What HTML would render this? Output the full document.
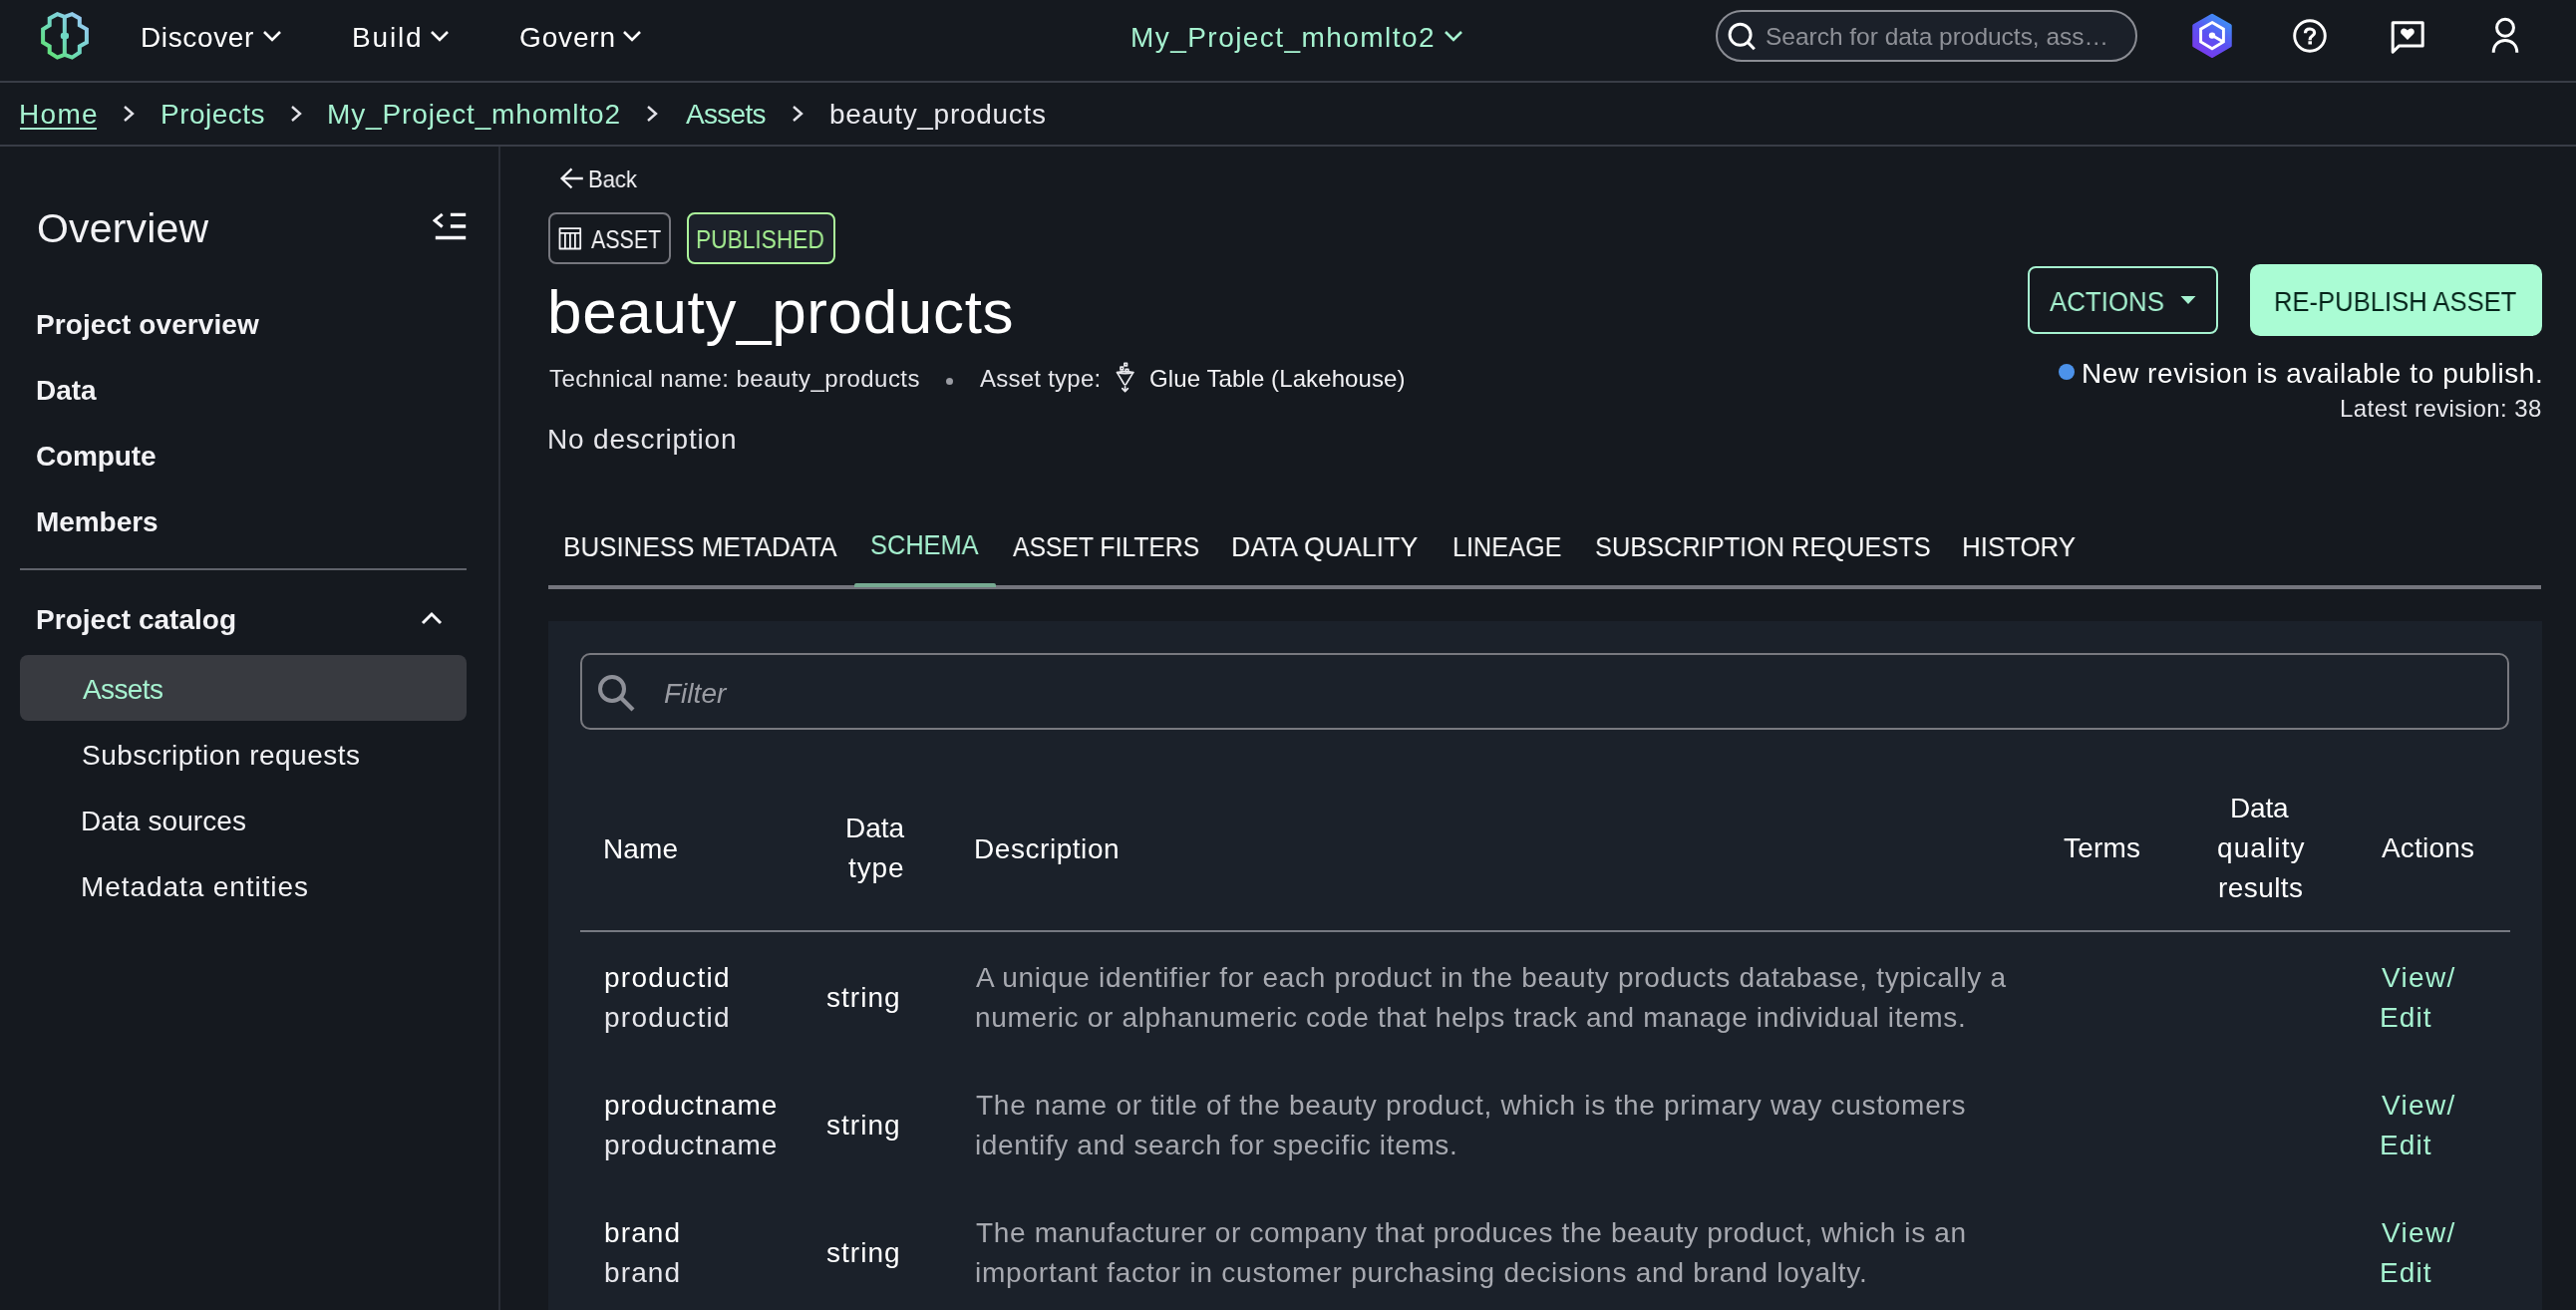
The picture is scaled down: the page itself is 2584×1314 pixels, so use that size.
<!DOCTYPE html>
<html><head><meta charset="utf-8"><title>beauty_products</title>
<style>
html,body{margin:0;padding:0;}
body{width:2584px;height:1314px;overflow:hidden;background:#15191f;position:relative;font-family:"Liberation Sans",sans-serif;}
.t{position:absolute;white-space:nowrap;display:block;will-change:transform;}
.a{position:absolute;}
</style></head><body>
<!-- layout lines -->
<div class="a" style="left:0;top:81px;width:2584px;height:2px;background:#393d46"></div>
<div class="a" style="left:0;top:145px;width:2584px;height:2px;background:#393d46"></div>
<div class="a" style="left:500px;top:147px;width:2px;height:1167px;background:#2a2e37"></div>
<div class="a" style="left:20px;top:570px;width:448px;height:2px;background:#5f626a"></div>
<div class="a" style="left:20px;top:657px;width:448px;height:66px;border-radius:8px;background:#383a40"></div>
<!-- container -->
<div class="a" style="left:550px;top:623px;width:2000px;height:700px;background:#1b212a"></div>
<!-- logo -->
<svg class="a" style="left:36px;top:8px" width="60" height="58" viewBox="0 0 60 58">
 <defs><linearGradient id="lg" gradientUnits="userSpaceOnUse" x1="8" y1="50" x2="51" y2="7"><stop offset="0" stop-color="#5fe36a"/><stop offset="0.5" stop-color="#70d8c4"/><stop offset="1" stop-color="#a0c6fb"/></linearGradient></defs>
 <g fill="none" stroke="url(#lg)" stroke-width="4" stroke-linejoin="miter">
  <path d="M21.5 6.2 L28.8 8.9 L36.3 6.2 L43.8 10.4 L43.8 17.3 L50.9 21.3 L50.9 34.5 L43.8 38.5 L43.8 44.7 L36.3 49.6 L28.8 46.9 L21.5 49.6 L13.7 44.7 L13.7 38.5 L7.1 34.5 L7.1 21.3 L13.7 17.3 L13.7 10.4 Z"/>
  <path d="M28.8 8.9 V46.9"/>
 </g>
 <rect x="24.8" y="25" width="8.2" height="6" rx="2" fill="#70d8c4"/>
</svg>
<!-- nav chevrons -->
<svg class="a" style="left:262px;top:28px" width="22" height="18" viewBox="0 0 22 18"><path d="M3 4 L11 12 L19 4" fill="none" stroke="#fff" stroke-width="2.6"/></svg>
<svg class="a" style="left:430px;top:28px" width="22" height="18" viewBox="0 0 22 18"><path d="M3 4 L11 12 L19 4" fill="none" stroke="#fff" stroke-width="2.6"/></svg>
<svg class="a" style="left:623px;top:28px" width="22" height="18" viewBox="0 0 22 18"><path d="M3 4 L11 12 L19 4" fill="none" stroke="#fff" stroke-width="2.6"/></svg>
<svg class="a" style="left:1447px;top:28px" width="22" height="18" viewBox="0 0 22 18"><path d="M3 4 L11 12 L19 4" fill="none" stroke="#a6f2d0" stroke-width="2.6"/></svg>
<!-- search pill -->
<div class="a" style="left:1721px;top:10px;width:419px;height:48px;border:2px solid #8b8d94;border-radius:26px;background:#1b2029"></div>
<svg class="a" style="left:1732px;top:21px" width="32" height="32" viewBox="0 0 32 32"><circle cx="13.6" cy="13.8" r="10.5" fill="none" stroke="#fff" stroke-width="3"/><path d="M21.2 21.4 L27.8 28.2" stroke="#fff" stroke-width="3"/></svg>
<!-- Q hex icon -->
<svg class="a" style="left:2194px;top:10px" width="50" height="52" viewBox="0 0 50 52">
 <defs><linearGradient id="qg" gradientUnits="userSpaceOnUse" x1="38" y1="8" x2="14" y2="46"><stop offset="0" stop-color="#3d93f6"/><stop offset="0.5" stop-color="#5a52f2"/><stop offset="1" stop-color="#7a38ec"/></linearGradient></defs>
 <path d="M25 5.5 L43 15.8 L43 35.8 L25 46.2 L7 35.8 L7 15.8 Z" fill="url(#qg)" stroke="url(#qg)" stroke-width="3.5" stroke-linejoin="round"/>
 <path d="M25 12.6 L36.4 19.2 L36.4 32 L25 38.8 L13.6 32 L13.6 19.2 Z" fill="none" stroke="#fff" stroke-width="2.9" stroke-linejoin="miter"/>
 <path d="M25 25.6 L35.5 31.6" stroke="#fff" stroke-width="2.9"/><circle cx="25" cy="25.6" r="3.2" fill="#fff"/>
</svg>
<!-- help -->
<svg class="a" style="left:2299px;top:18px" width="36" height="36" viewBox="0 0 36 36"><circle cx="18" cy="18" r="15.3" fill="none" stroke="#fff" stroke-width="2.9"/><path d="M13.5 15.2 C13.5 12.4 15.5 11 18 11 C20.7 11 22.6 12.7 22.6 15 C22.6 17.9 18.2 18.2 18.2 21.2 V22.2" fill="none" stroke="#fff" stroke-width="3.2"/><rect x="16.4" y="23.3" width="3.6" height="3.2" fill="#fff"/></svg>
<!-- feedback -->
<svg class="a" style="left:2396px;top:19px" width="38" height="36" viewBox="0 0 38 36"><path d="M4.2 33.2 V3.7 H34.2 V26.9 H10.6 Z" fill="none" stroke="#fff" stroke-width="3" stroke-linejoin="round"/><path d="M19 21 L13.2 15.3 C11.6 13.7 11.9 10.6 14.3 9.7 C16.3 9 18 10.2 19 11.6 C20 10.2 21.7 9 23.7 9.7 C26.1 10.6 26.4 13.7 24.8 15.3 Z" fill="#fff"/></svg>
<!-- user -->
<svg class="a" style="left:2497px;top:16px" width="32" height="38" viewBox="0 0 32 38"><circle cx="16" cy="11.75" r="8.45" fill="none" stroke="#fff" stroke-width="3"/><path d="M4.2 36.7 C4.2 29 9.5 24.6 16 24.6 C22.5 24.6 27.8 29 27.8 36.7" fill="none" stroke="#fff" stroke-width="3"/></svg>
<!-- breadcrumb chevrons -->
<svg class="a" style="left:122px;top:104px" width="16" height="20" viewBox="0 0 16 20"><path d="M3 3 L11 10 L3 17" fill="none" stroke="#e2e2e8" stroke-width="2.4"/></svg>
<svg class="a" style="left:290px;top:104px" width="16" height="20" viewBox="0 0 16 20"><path d="M3 3 L11 10 L3 17" fill="none" stroke="#e2e2e8" stroke-width="2.4"/></svg>
<svg class="a" style="left:647px;top:104px" width="16" height="20" viewBox="0 0 16 20"><path d="M3 3 L11 10 L3 17" fill="none" stroke="#e2e2e8" stroke-width="2.4"/></svg>
<svg class="a" style="left:793px;top:104px" width="16" height="20" viewBox="0 0 16 20"><path d="M3 3 L11 10 L3 17" fill="none" stroke="#e2e2e8" stroke-width="2.4"/></svg>
<div class="a" style="left:20px;top:128px;width:77px;height:2px;background:#a6f2d0"></div>
<!-- collapse icon -->
<svg class="a" style="left:434px;top:212px" width="36" height="32" viewBox="0 0 36 32"><path d="M9.7 2.9 L2.1 9.2 L9.7 15.5" fill="none" stroke="#f7f7fa" stroke-width="3"/><path d="M17.9 3.35 H33.2 M17.9 15 H33.2 M2.8 26.5 H33.2" stroke="#f7f7fa" stroke-width="3.4"/></svg>
<!-- chevron up -->
<svg class="a" style="left:420px;top:610px" width="26" height="20" viewBox="0 0 26 20"><path d="M4 15 L13 6 L22 15" fill="none" stroke="#f7f7fa" stroke-width="3"/></svg>
<!-- back arrow -->
<svg class="a" style="left:560px;top:167px" width="28" height="24" viewBox="0 0 28 24"><path d="M13.5 2.4 L3.6 12 L13.5 21.4 M3.6 12 H24.8" fill="none" stroke="#f2f2f5" stroke-width="2.3"/></svg>
<!-- badges -->
<div class="a" style="left:550px;top:213px;width:119px;height:48px;border:2px solid #76777e;border-radius:8px"></div>
<svg class="a" style="left:559px;top:227px" width="26" height="24" viewBox="0 0 26 24"><path d="M2.5 2.2 H23.2 V22.5 H2.5 Z M2.5 6.8 H23.2 M7.9 6.8 V22.5 M12.9 6.8 V22.5 M17.9 6.8 V22.5" fill="none" stroke="#f2f2f5" stroke-width="1.8" stroke-linejoin="round"/></svg>
<div class="a" style="left:689px;top:213px;width:145px;height:48px;border:2px solid #acf59b;border-radius:8px;background:#1c212a"></div>
<!-- bullet dot -->
<div class="a" style="left:948.5px;top:379px;width:7px;height:7px;border-radius:50%;background:#9a9ca3"></div>
<!-- glue icon -->
<svg class="a" style="left:1110px;top:358px" width="40" height="40" viewBox="0 0 40 40"><g fill="none" stroke="#e8e8ec" stroke-width="1.7" stroke-linejoin="round" stroke-linecap="round">
<path d="M10.6 15.6 Q18.6 13.4 26.7 15.6 Q18.6 17.8 10.6 15.6 Z"/>
<path d="M10.6 15.6 L17.6 27.3 Q18.6 28.6 19.6 27.3 L26.7 15.6"/>
<path d="M15.8 31.6 L18.6 34.6 L21.4 31.6 M18.6 29.8 V34"/>
<rect x="14" y="10.2" width="2.6" height="2.6"/><rect x="17.9" y="6.3" width="2.6" height="2.6"/><rect x="19.2" y="12.3" width="2.6" height="2.6"/>
</g></svg>
<!-- buttons -->
<div class="a" style="left:2034px;top:267px;width:187px;height:64px;border:2px solid #a6f2d0;border-radius:8px"></div>
<svg class="a" style="left:2186px;top:295px" width="18" height="12" viewBox="0 0 18 12"><path d="M1.5 2 H16.5 L9 10 Z" fill="#a6f2d0"/></svg>
<div class="a" style="left:2257px;top:265px;width:293px;height:72px;border-radius:10px;background:#aafcd4"></div>
<div class="a" style="left:2065px;top:365px;width:16px;height:16px;border-radius:50%;background:#4c92ea"></div>
<!-- tabs -->
<div class="a" style="left:550px;top:587px;width:1999px;height:4px;background:#74757d"></div>
<div class="a" style="left:857px;top:585px;width:142px;height:4px;border-radius:2px 2px 0 0;background:#77aa92"></div>
<!-- filter input -->
<div class="a" style="left:582px;top:655px;width:1931px;height:73px;border:2.5px solid #78797f;border-radius:10px"></div>
<svg class="a" style="left:597px;top:674px" width="42" height="42" viewBox="0 0 42 42"><circle cx="17" cy="17" r="12" fill="none" stroke="#8e9098" stroke-width="4"/><path d="M25.5 25.5 L38 38" stroke="#8e9098" stroke-width="4.2"/></svg>
<!-- table header divider -->
<div class="a" style="left:582px;top:933px;width:1936px;height:2px;background:#767981"></div>

<span class="t" id="nav_discover" style="left:141.00px;top:24.30px;font-size:28px;line-height:28px;color:#ffffff;letter-spacing:0.631px;">Discover</span>
<span class="t" id="nav_build" style="left:353.00px;top:24.30px;font-size:28px;line-height:28px;color:#ffffff;letter-spacing:1.828px;">Build</span>
<span class="t" id="nav_govern" style="left:521.00px;top:24.30px;font-size:28px;line-height:28px;color:#ffffff;letter-spacing:0.850px;">Govern</span>
<span class="t" id="nav_proj" style="left:1134.00px;top:24.30px;font-size:28px;line-height:28px;color:#a6f2d0;letter-spacing:1.446px;">My_Project_mhomlto2</span>
<span class="t" id="nav_search" style="left:1771.00px;top:25.46px;font-size:24.5px;line-height:24.5px;color:#8e9097;letter-spacing:-0.018px;">Search for data products, ass…</span>
<span class="t" id="bc_home" style="left:19.00px;top:101.30px;font-size:28px;line-height:28px;color:#a6f2d0;letter-spacing:1.294px;">Home</span>
<span class="t" id="bc_projects" style="left:160.50px;top:101.30px;font-size:28px;line-height:28px;color:#a6f2d0;letter-spacing:0.479px;">Projects</span>
<span class="t" id="bc_proj" style="left:327.50px;top:101.30px;font-size:28px;line-height:28px;color:#a6f2d0;letter-spacing:0.862px;">My_Project_mhomlto2</span>
<span class="t" id="bc_assets" style="left:687.50px;top:101.30px;font-size:28px;line-height:28px;color:#a6f2d0;letter-spacing:-0.705px;">Assets</span>
<span class="t" id="bc_beauty" style="left:832.00px;top:101.30px;font-size:28px;line-height:28px;color:#e9e9ee;letter-spacing:0.712px;">beauty_products</span>
<span class="t" id="sb_overview" style="left:36.50px;top:208.79px;font-size:41px;line-height:41px;color:#f2f2f5;letter-spacing:0.177px;">Overview</span>
<span class="t" id="sb_po" style="left:36.00px;top:312.30px;font-size:28px;line-height:28px;color:#f2f2f5;font-weight:700;letter-spacing:0.082px;">Project overview</span>
<span class="t" id="sb_data" style="left:36.00px;top:378.30px;font-size:28px;line-height:28px;color:#f2f2f5;font-weight:700;letter-spacing:-0.039px;">Data</span>
<span class="t" id="sb_compute" style="left:36.00px;top:444.30px;font-size:28px;line-height:28px;color:#f2f2f5;font-weight:700;letter-spacing:-0.125px;">Compute</span>
<span class="t" id="sb_members" style="left:36.00px;top:510.30px;font-size:28px;line-height:28px;color:#f2f2f5;font-weight:700;letter-spacing:-0.061px;">Members</span>
<span class="t" id="sb_pc" style="left:36.00px;top:608.30px;font-size:28px;line-height:28px;color:#f2f2f5;font-weight:700;letter-spacing:0.027px;">Project catalog</span>
<span class="t" id="sb_assets" style="left:83.00px;top:678.30px;font-size:28px;line-height:28px;color:#a6f2d0;letter-spacing:-0.605px;">Assets</span>
<span class="t" id="sb_subs" style="left:82.00px;top:744.30px;font-size:28px;line-height:28px;color:#f2f2f5;letter-spacing:0.487px;">Subscription requests</span>
<span class="t" id="sb_ds" style="left:81.00px;top:810.30px;font-size:28px;line-height:28px;color:#f2f2f5;letter-spacing:0.094px;">Data sources</span>
<span class="t" id="sb_me" style="left:81.00px;top:876.30px;font-size:28px;line-height:28px;color:#f2f2f5;letter-spacing:0.922px;">Metadata entities</span>
<span class="t" id="back" style="left:590.08px;top:168.18px;font-size:24px;line-height:24px;color:#f2f2f5;transform:scaleX(0.9184);transform-origin:0 0;">Back</span>
<span class="t" id="badge_asset" style="left:592.50px;top:228.34px;font-size:25px;line-height:25px;color:#f2f2f5;transform:scaleX(0.8568);transform-origin:0 0;">ASSET</span>
<span class="t" id="badge_pub" style="left:698.18px;top:228.34px;font-size:25px;line-height:25px;color:#a6f092;transform:scaleX(0.9087);transform-origin:0 0;">PUBLISHED</span>
<span class="t" id="title" style="left:548.50px;top:281.52px;font-size:62px;line-height:62px;color:#ffffff;letter-spacing:0.648px;">beauty_products</span>
<span class="t" id="tech" style="left:551.00px;top:367.68px;font-size:24px;line-height:24px;color:#e6e6eb;letter-spacing:0.465px;">Technical name: beauty_products</span>
<span class="t" id="atype" style="left:983.00px;top:367.68px;font-size:24px;line-height:24px;color:#e6e6eb;letter-spacing:0.245px;">Asset type:</span>
<span class="t" id="glue" style="left:1153.00px;top:367.68px;font-size:24px;line-height:24px;color:#f2f2f5;letter-spacing:0.103px;">Glue Table (Lakehouse)</span>
<span class="t" id="nodesc" style="left:549.00px;top:427.30px;font-size:28px;line-height:28px;color:#e6e6eb;letter-spacing:0.815px;">No description</span>
<span class="t" id="btn_actions" style="left:2056.00px;top:288.37px;font-size:28.5px;line-height:28.5px;color:#a6f2d0;transform:scaleX(0.9072);transform-origin:0 0;">ACTIONS</span>
<span class="t" id="btn_repub" style="left:2280.70px;top:288.17px;font-size:28.5px;line-height:28.5px;color:#05241a;transform:scaleX(0.8982);transform-origin:0 0;">RE-PUBLISH ASSET</span>
<span class="t" id="newrev" style="left:2088.00px;top:361.30px;font-size:28px;line-height:28px;color:#ffffff;letter-spacing:0.577px;">New revision is available to publish.</span>
<span class="t" id="latest" style="left:2347.00px;top:397.68px;font-size:24px;line-height:24px;color:#e6e6eb;letter-spacing:0.421px;">Latest revision: 38</span>
<span class="t" id="tab_bm" style="left:565.14px;top:535.30px;font-size:28px;line-height:28px;color:#ffffff;transform:scaleX(0.9288);transform-origin:0 0;">BUSINESS METADATA</span>
<span class="t" id="tab_schema" style="left:873.09px;top:533.30px;font-size:28px;line-height:28px;color:#a6f2d0;transform:scaleX(0.9067);transform-origin:0 0;">SCHEMA</span>
<span class="t" id="tab_af" style="left:1015.50px;top:535.30px;font-size:28px;line-height:28px;color:#ffffff;transform:scaleX(0.8822);transform-origin:0 0;">ASSET FILTERS</span>
<span class="t" id="tab_dq" style="left:1235.10px;top:535.30px;font-size:28px;line-height:28px;color:#ffffff;transform:scaleX(0.9520);transform-origin:0 0;">DATA QUALITY</span>
<span class="t" id="tab_lin" style="left:1457.20px;top:535.30px;font-size:28px;line-height:28px;color:#ffffff;transform:scaleX(0.9014);transform-origin:0 0;">LINEAGE</span>
<span class="t" id="tab_sr" style="left:1599.60px;top:535.30px;font-size:28px;line-height:28px;color:#ffffff;transform:scaleX(0.9050);transform-origin:0 0;">SUBSCRIPTION REQUESTS</span>
<span class="t" id="tab_hist" style="left:1968.15px;top:535.30px;font-size:28px;line-height:28px;color:#ffffff;transform:scaleX(0.9239);transform-origin:0 0;">HISTORY</span>
<span class="t" id="filter" style="left:666.00px;top:682.30px;font-size:28px;line-height:28px;color:#9a9ca3;font-style:italic;letter-spacing:0.021px;">Filter</span>
<span class="t" id="th_name" style="left:605.00px;top:837.80px;font-size:28px;line-height:28px;color:#ffffff;letter-spacing:0.128px;">Name</span>
<span class="t" id="th_data1" style="left:848.00px;top:817.30px;font-size:28px;line-height:28px;color:#ffffff;letter-spacing:-0.024px;">Data</span>
<span class="t" id="th_type" style="left:851.00px;top:857.30px;font-size:28px;line-height:28px;color:#ffffff;letter-spacing:0.883px;">type</span>
<span class="t" id="th_desc" style="left:977.00px;top:837.80px;font-size:28px;line-height:28px;color:#ffffff;letter-spacing:0.552px;">Description</span>
<span class="t" id="th_terms" style="left:2070.00px;top:837.30px;font-size:28px;line-height:28px;color:#ffffff;letter-spacing:0.195px;">Terms</span>
<span class="t" id="th_data2" style="left:2237.00px;top:797.30px;font-size:28px;line-height:28px;color:#ffffff;letter-spacing:-0.191px;">Data</span>
<span class="t" id="th_quality" style="left:2223.50px;top:837.30px;font-size:28px;line-height:28px;color:#ffffff;letter-spacing:1.094px;">quality</span>
<span class="t" id="th_results" style="left:2225.00px;top:876.80px;font-size:28px;line-height:28px;color:#ffffff;letter-spacing:0.422px;">results</span>
<span class="t" id="th_actions" style="left:2389.00px;top:837.30px;font-size:28px;line-height:28px;color:#ffffff;letter-spacing:0.197px;">Actions</span>
<span class="t" id="r0_n1" style="left:606.00px;top:966.80px;font-size:28px;line-height:28px;color:#ffffff;letter-spacing:1.298px;">productid</span>
<span class="t" id="r0_n2" style="left:606.00px;top:1006.80px;font-size:28px;line-height:28px;color:#e6e6eb;letter-spacing:1.298px;">productid</span>
<span class="t" id="r0_type" style="left:829.00px;top:987.30px;font-size:28px;line-height:28px;color:#ffffff;letter-spacing:1.021px;">string</span>
<span class="t" id="r0_d1" style="left:979.00px;top:966.80px;font-size:28px;line-height:28px;color:#a7a9b0;letter-spacing:0.694px;">A unique identifier for each product in the beauty products database, typically a</span>
<span class="t" id="r0_d2" style="left:978.00px;top:1006.80px;font-size:28px;line-height:28px;color:#a7a9b0;letter-spacing:0.672px;">numeric or alphanumeric code that helps track and manage individual items.</span>
<span class="t" id="r0_view" style="left:2389.00px;top:966.80px;font-size:28px;line-height:28px;color:#a6f2d0;letter-spacing:1.329px;">View/</span>
<span class="t" id="r0_edit" style="left:2387.00px;top:1007.30px;font-size:28px;line-height:28px;color:#a6f2d0;letter-spacing:1.094px;">Edit</span>
<span class="t" id="r1_n1" style="left:606.00px;top:1094.80px;font-size:28px;line-height:28px;color:#ffffff;letter-spacing:0.989px;">productname</span>
<span class="t" id="r1_n2" style="left:606.00px;top:1134.80px;font-size:28px;line-height:28px;color:#e6e6eb;letter-spacing:0.989px;">productname</span>
<span class="t" id="r1_type" style="left:829.00px;top:1115.30px;font-size:28px;line-height:28px;color:#ffffff;letter-spacing:1.021px;">string</span>
<span class="t" id="r1_d1" style="left:979.00px;top:1094.80px;font-size:28px;line-height:28px;color:#a7a9b0;letter-spacing:0.731px;">The name or title of the beauty product, which is the primary way customers</span>
<span class="t" id="r1_d2" style="left:978.00px;top:1134.80px;font-size:28px;line-height:28px;color:#a7a9b0;letter-spacing:0.650px;">identify and search for specific items.</span>
<span class="t" id="r1_view" style="left:2389.00px;top:1094.80px;font-size:28px;line-height:28px;color:#a6f2d0;letter-spacing:1.329px;">View/</span>
<span class="t" id="r1_edit" style="left:2387.00px;top:1135.30px;font-size:28px;line-height:28px;color:#a6f2d0;letter-spacing:1.094px;">Edit</span>
<span class="t" id="r2_n1" style="left:606.00px;top:1222.80px;font-size:28px;line-height:28px;color:#ffffff;letter-spacing:1.115px;">brand</span>
<span class="t" id="r2_n2" style="left:606.00px;top:1262.80px;font-size:28px;line-height:28px;color:#e6e6eb;letter-spacing:1.115px;">brand</span>
<span class="t" id="r2_type" style="left:829.00px;top:1243.30px;font-size:28px;line-height:28px;color:#ffffff;letter-spacing:1.021px;">string</span>
<span class="t" id="r2_d1" style="left:979.00px;top:1222.80px;font-size:28px;line-height:28px;color:#a7a9b0;letter-spacing:0.650px;">The manufacturer or company that produces the beauty product, which is an</span>
<span class="t" id="r2_d2" style="left:978.00px;top:1262.80px;font-size:28px;line-height:28px;color:#a7a9b0;letter-spacing:0.773px;">important factor in customer purchasing decisions and brand loyalty.</span>
<span class="t" id="r2_view" style="left:2389.00px;top:1222.80px;font-size:28px;line-height:28px;color:#a6f2d0;letter-spacing:1.329px;">View/</span>
<span class="t" id="r2_edit" style="left:2387.00px;top:1263.30px;font-size:28px;line-height:28px;color:#a6f2d0;letter-spacing:1.094px;">Edit</span>
</body></html>
